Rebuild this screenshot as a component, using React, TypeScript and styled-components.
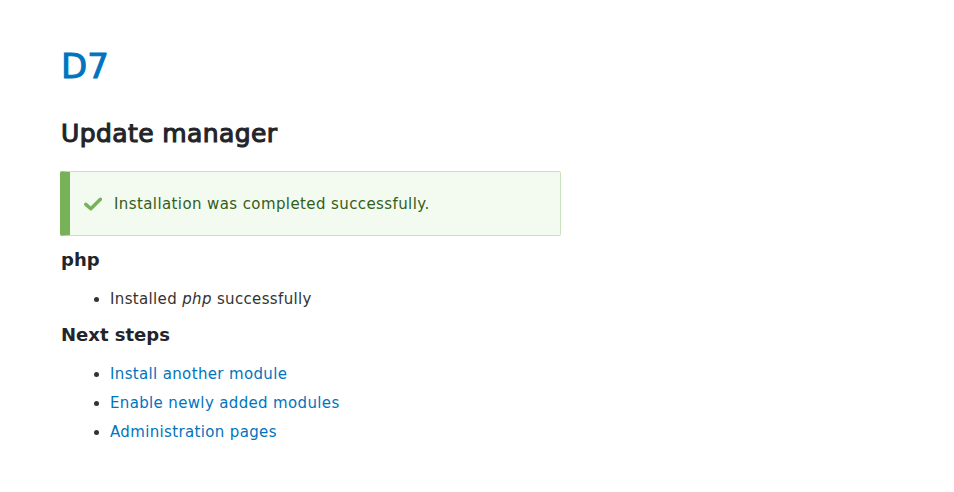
import React from "react";
import styled, { createGlobalStyle } from "styled-components";

const Global = createGlobalStyle`
  html, body { margin: 0; padding: 0; background: #fff; }
  body { font-family: "DejaVu Sans", Verdana, sans-serif; color: #333; font-size: 15px; }
`;

const Page = styled.div`
  padding: 46px 0 40px 61px;
  width: 500px;
`;

const SiteName = styled.h1`
  margin: 0;
  font-size: 34px;
  line-height: 40px;
  font-weight: normal;
  -webkit-text-stroke: 1px currentColor;
  color: #0074bd;
`;

const Title = styled.h1`
  margin: 32px 0 0;
  font-size: 25px;
  line-height: 32px;
  font-weight: normal;
  letter-spacing: 0.4px;
  -webkit-text-stroke: 1.1px currentColor;
  color: #232429;
`;

const Message = styled.div`
  margin: 21px 0 0 -1px;
  box-sizing: border-box;
  width: 501px;
  height: 65px;
  display: flex;
  align-items: center;
  gap: 12px;
  padding: 0 20px 0 14px;
  background: #f3faef;
  border: 1px solid #c9e1bd;
  border-left: 10px solid #77b259;
  border-radius: 2px;
  color: #325e1c;
  font-size: 15px;
  letter-spacing: 0.4px;
`;

const SubTitle = styled.h2<{ $top: number }>`
  margin: ${(p) => p.$top}px 0 0;
  font-size: 18px;
  line-height: 24px;
  font-weight: bold;
  color: #232429;
`;

const List = styled.ul`
  margin: 13px 0 0;
  padding: 0 0 0 49px;
  list-style: disc;
  li {
    line-height: 29px;
    font-size: 15px;
    letter-spacing: 0.35px;
  }
`;

const Link = styled.a`
  color: #0074bd;
  text-decoration: none;
`;

const Check = () => (
  <svg width="18" height="14" viewBox="0 0 18 14" aria-hidden="true">
    <path d="M1.8 7.4 L6.8 11.8 L16.4 2.2" fill="none" stroke="#77b259" strokeWidth="3.4" strokeLinecap="round" strokeLinejoin="round" />
  </svg>
);

export default function App() {
  return (
    <Page>
      <Global />
      <SiteName>D7</SiteName>
      <Title>Update manager</Title>
      <Message>
        <Check />
        <span>Installation was completed successfully.</span>
      </Message>
      <SubTitle $top={12}>php</SubTitle>
      <List>
        <li>Installed <em>php</em> successfully</li>
      </List>
      <SubTitle $top={9}>Next steps</SubTitle>
      <List>
        <li><Link href="#">Install another module</Link></li>
        <li><Link href="#">Enable newly added modules</Link></li>
        <li><Link href="#">Administration pages</Link></li>
      </List>
    </Page>
  );
}
